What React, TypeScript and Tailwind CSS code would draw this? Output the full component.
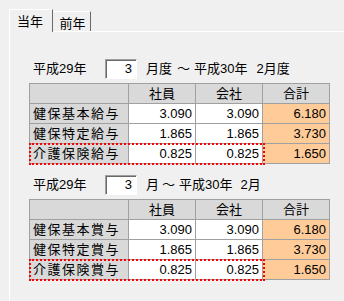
import React from "react";

const font = { fontFamily: "'Liberation Sans', 'Noto Sans CJK JP', sans-serif" };

type Row = { label: string; a: string; b: string; t: string };

function Table({ rows }: { rows: Row[] }) {
  const head = "h-[20px] bg-[#d9d9d9] border-r border-b border-[#a0a0a0] flex items-center justify-center text-[13px] text-black";
  const lab = "h-[20px] bg-[#d9d9d9] border-r border-b border-[#a0a0a0] flex items-center pl-[3px] text-[13px] text-black tracking-[1.5px]";
  const num = "h-[20px] bg-white border-r border-b border-[#a0a0a0] flex items-center justify-end pr-[3px] text-[13px] text-black";
  const tot = "h-[20px] bg-[#ffcc99] border-r border-b border-[#a0a0a0] flex items-center justify-end pr-[3px] text-[13px] text-black";
  return (
    <div className="relative w-[301px] border-l border-t border-[#a0a0a0] grid grid-cols-[99px_67px_67px_67px]">
      <div className={head}></div>
      <div className={head}>社員</div>
      <div className={head}>会社</div>
      <div className={head}>合計</div>
      {rows.map((r) => (
        <React.Fragment key={r.label}>
          <div className={lab}>{r.label}</div>
          <div className={num}>{r.a}</div>
          <div className={num}>{r.b}</div>
          <div className={tot}>{r.t}</div>
        </React.Fragment>
      ))}
      <div className="absolute left-[-1px] top-[59px] w-[236px] h-[22px] border-2 border-dotted border-[#ff0000] pointer-events-none"></div>
    </div>
  );
}

function Spin({ v }: { v: string }) {
  return (
    <div className="w-[32px] h-[20px] bg-white border border-t-[#a0a0a0] border-l-[#a0a0a0] border-b-white border-r-white shadow-[inset_1px_1px_0_#696969] flex items-center justify-end pr-[4px] text-[13px]">
      {v}
    </div>
  );
}

function Section({ end, rows }: { end: React.ReactNode; rows: Row[] }) {
  return (
    <div className="flex flex-col">
      <div className="flex items-center h-[20px] pl-[4px] text-[13px] text-black">
        <span className="w-[72px]">平成29年</span>
        <Spin v="3" />
        {end}
      </div>
      <div className="mt-[4px]">
        <Table rows={rows} />
      </div>
    </div>
  );
}

export default function App() {
  const rows1: Row[] = [
    { label: "健保基本給与", a: "3.090", b: "3.090", t: "6.180" },
    { label: "健保特定給与", a: "1.865", b: "1.865", t: "3.730" },
    { label: "介護保険給与", a: "0.825", b: "0.825", t: "1.650" },
  ];
  const rows2: Row[] = [
    { label: "健保基本賞与", a: "3.090", b: "3.090", t: "6.180" },
    { label: "健保特定賞与", a: "1.865", b: "1.865", t: "3.730" },
    { label: "介護保険賞与", a: "0.825", b: "0.825", t: "1.650" },
  ];
  return (
    <div style={font} className="w-[344px] h-[301px] bg-[#f0f0f0] overflow-hidden pt-[9px] pl-[9px] flex flex-col text-black">
      <div className="flex items-end h-[22px]">
        <div className="relative z-10 w-[44px] h-[23px] -mb-[1px] bg-[#f0f0f0] border-l border-t border-white border-r border-r-[#696969] flex items-start justify-center pt-[2px] text-[13px] pr-[2px]">
          当年
        </div>
        <div className="w-[38px] h-[20px] border-t border-white border-r border-r-[#696969] flex items-start justify-center pt-[2px] text-[13px] pl-[2px]">
          前年
        </div>
      </div>
      <div className="flex-1 border-l border-t border-white pl-[19px] pt-[27px] flex flex-col gap-[11px]">
        <Section
          rows={rows1}
          end={
            <>
              <span className="ml-[9px]">月度</span>
              <span className="ml-[5px]">～</span>
              <span className="ml-[4px]">平成30年</span>
              <span className="ml-[9px]">2月度</span>
            </>
          }
        />
        <Section
          rows={rows2}
          end={
            <>
              <span className="ml-[9px]">月</span>
              <span className="ml-[3px]">～</span>
              <span className="ml-[4px]">平成30年</span>
              <span className="ml-[8px]">2月</span>
            </>
          }
        />
      </div>
    </div>
  );
}
